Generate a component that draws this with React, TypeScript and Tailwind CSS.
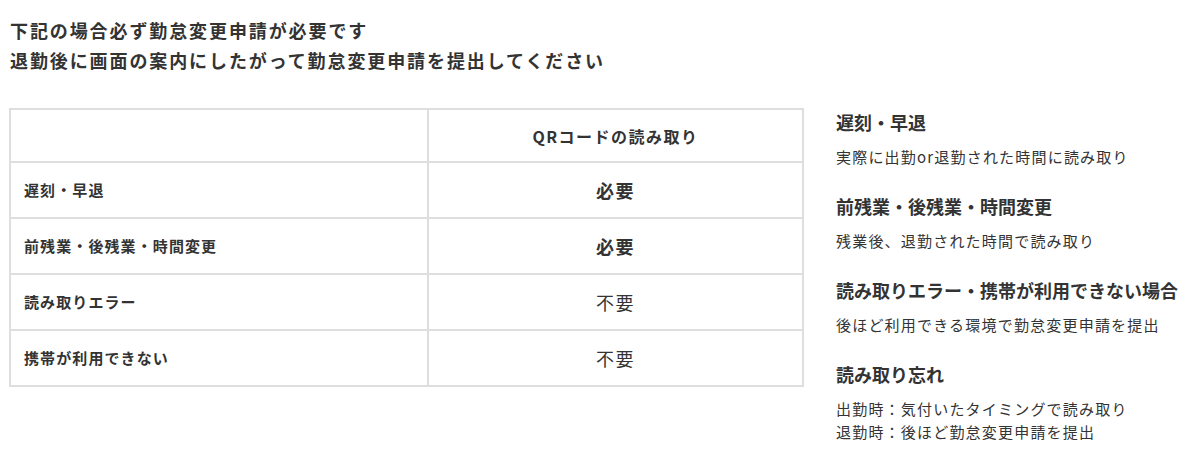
import React from 'react';

const rows = [
  { label: '遅刻・早退', value: '必要', strong: true },
  { label: '前残業・後残業・時間変更', value: '必要', strong: true },
  { label: '読み取りエラー', value: '不要', strong: false },
  { label: '携帯が利用できない', value: '不要', strong: false },
];

const notes = [
  { title: '遅刻・早退', lines: ['実際に出勤or退勤された時間に読み取り'] },
  { title: '前残業・後残業・時間変更', lines: ['残業後、退勤された時間で読み取り'] },
  { title: '読み取りエラー・携帯が利用できない場合', lines: ['後ほど利用できる環境で勤怠変更申請を提出'] },
  { title: '読み取り忘れ', lines: ['出勤時：気付いたタイミングで読み取り', '退勤時：後ほど勤怠変更申請を提出'] },
];

const App: React.FC = () => {
  return (
    <div
      className="min-h-screen bg-white text-[#333] pl-[9px] pt-[15px]"
      style={{ fontFamily: '"Noto Sans CJK JP", "Noto Sans", sans-serif' }}
    >
      {/* Intro */}
      <div className="pl-px text-[18px] font-bold leading-[30px] tracking-[1.9px]">
        <p>下記の場合必ず勤怠変更申請が必要です</p>
        <p>退勤後に画面の案内にしたがって勤怠変更申請を提出してください</p>
      </div>

      <div className="flex items-start gap-[32px] mt-[33px]">
        {/* Table */}
        <table className="w-[795px] border-collapse border-2 border-[#dedede] shrink-0">
          <thead>
            <tr className="h-[53px]">
              <th className="w-[418px] border-2 border-[#dedede]"></th>
              <th className="border-2 border-[#dedede] text-[16px] font-bold tracking-[1.5px]">QRコードの読み取り</th>
            </tr>
          </thead>
          <tbody>
            {rows.map((r) => (
              <tr key={r.label} className="h-[56px]">
                <td className="border-2 border-[#dedede] pl-[13px] text-[15px] font-bold tracking-[1.1px]">{r.label}</td>
                <td
                  className={
                    r.strong
                      ? 'border-2 border-[#dedede] text-center text-[18px] font-bold tracking-[1.5px]'
                      : 'border-2 border-[#dedede] text-center text-[18px] tracking-[1.5px]'
                  }
                >
                  {r.value}
                </td>
              </tr>
            ))}
          </tbody>
        </table>

        {/* Notes */}
        <div className="flex flex-col gap-[25px] pt-px">
          {notes.map((n) => (
            <div key={n.title}>
              <h3 className="text-[18px] font-bold leading-[26px] whitespace-nowrap">{n.title}</h3>
              <div className="mt-[10px] text-[15px] leading-[23px] tracking-[1.2px] whitespace-nowrap">
                {n.lines.map((l) => (
                  <p key={l}>{l}</p>
                ))}
              </div>
            </div>
          ))}
        </div>
      </div>
    </div>
  );
};

export default App;
